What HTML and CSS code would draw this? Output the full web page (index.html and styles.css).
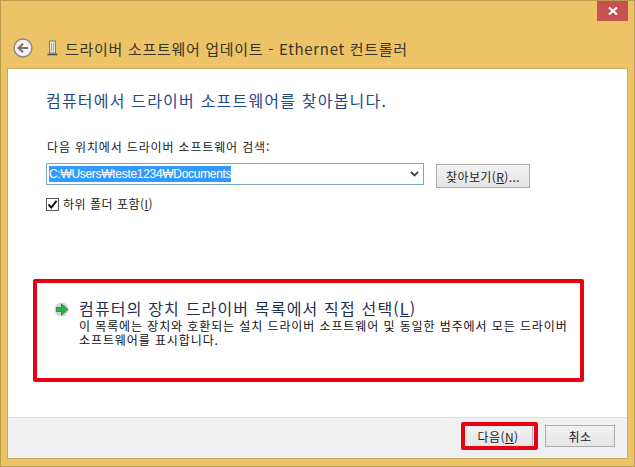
FILE: index.html
```html
<!DOCTYPE html>
<html lang="ko">
<head>
<meta charset="utf-8">
<title>드라이버 소프트웨어 업데이트</title>
<link rel="stylesheet" href="styles.css">
</head>
<body>
<div class="window">
  <div class="close"><svg width="10" height="10" viewBox="0 0 10 10"><path d="M1 1.500 9 8.500M9 1.500 1 8.500" stroke="#fff" stroke-width="2.200" fill="none"/></svg></div>
  <header class="titlebar">
    <svg class="back" width="20" height="20" viewBox="0 0 20 20"><circle cx="10" cy="10" r="9" fill="#f4f2ee" stroke="#8b8580" stroke-width="1.400"/><path d="M15 10H6M10 5.800 5.600 10 10 14.200" stroke="#7a7478" stroke-width="2.200" fill="none"/></svg>
    <svg class="device" width="11" height="16" viewBox="0 0 11 16"><rect x="2.500" y="1" width="6" height="12" fill="#e8e6d8" stroke="#7d7f70"/><path d="M4.500 3v8M6.500 3v8" stroke="#a8a898"/><path d="M0.500 14.500h10" stroke="#4a5058" stroke-width="1.600"/></svg>
    <span class="title">드라이버 소프트웨어 업데이트 - Ethernet 컨트롤러</span>
  </header>
  <main class="panel">
    <div class="content">
      <h1 class="heading">컴퓨터에서 드라이버 소프트웨어를 찾아봅니다.</h1>
      <p class="label">다음 위치에서 드라이버 소프트웨어 검색:</p>
      <div class="pathrow">
        <div class="combo"><span class="selected">C:₩Users₩teste1234₩Documents</span>
          <svg class="chev" width="9" height="6" viewBox="0 0 9 6"><path d="M1 1 4.500 4.500 8 1" stroke="#444" stroke-width="1.800" fill="none"/></svg>
        </div>
        <button class="btn browse">찾아보기(<u>R</u>)...</button>
      </div>
      <div class="check">
        <span class="box"><svg width="11" height="11" viewBox="0 0 11 11"><path d="M1.500 5.500 4.300 8.500 9.500 1.800" stroke="#111" stroke-width="2" fill="none"/></svg></span>
        <span>하위 폴더 포함(<u>I</u>)</span>
      </div>
      <div class="link">
        <svg class="arrow" width="16" height="15" viewBox="0 0 16 15"><circle cx="7.500" cy="7.500" r="7" fill="#ccd6d2"/><path d="M2.500 5.500H7.500V2l6.500 5.500-6.500 5.500V9.500H2.500Z" fill="#2fae4c" stroke="#167a2e" stroke-width=".7"/></svg>
        <div class="linktext">
          <div class="linktitle">컴퓨터의 장치 드라이버 목록에서 직접 선택(<u>L</u>)</div>
          <div class="linkdesc">이 목록에는 장치와 호환되는 설치 드라이버 소프트웨어 및 동일한 범주에서 모든 드라이버 소프트웨어를 표시합니다.</div>
        </div>
      </div>
    </div>
    <footer class="footer">
      <button class="btn next">다음(<u>N</u>)</button>
      <button class="btn cancel">취소</button>
    </footer>
  </main>
  <div class="mark mark-link"></div>
  <div class="mark mark-next"></div>
</div>
</body>
</html>
```
FILE: styles.css
```css
* { box-sizing: border-box; }
html, body { margin: 0; padding: 0; }
body {
  width: 635px;
  height: 467px;
  overflow: hidden;
  font-family: "Noto Sans CJK KR", "Liberation Sans", sans-serif;
  color: #222;
}
.window {
  position: relative;
  width: 635px;
  height: 467px;
  padding: 0 7px 8px;
  display: flex;
  flex-direction: column;
  background: #ecc467;
  border: 1px solid #bd9c4c;
}
.close {
  position: absolute;
  top: 0;
  right: 6px;
  width: 31px;
  height: 20px;
  background: #c75050;
  display: flex;
  align-items: center;
  justify-content: center;
}
.titlebar {
  height: 68px;
  flex: none;
  display: flex;
  align-items: center;
  padding: 26px 0 0 5px;
}
.back { margin-right: 14px; }
.device { margin-right: 7px; }
.title {
  font-size: 15px;
  letter-spacing: 0.7px;
  color: #3a3428;
  white-space: nowrap;
}
.panel {
  flex: 1;
  display: flex;
  flex-direction: column;
  background: #fff;
  outline: 1px solid #c9a95a;
}
.content {
  flex: 1;
  padding: 19px 0 0 38px;
}
.heading {
  margin: 0;
  font-size: 16px;
  line-height: 24px;
  font-weight: 400;
  letter-spacing: 1.2px;
  color: #1f4a8c;
}
.label {
  margin: 27px 0 0 1px;
  font-size: 12px;
  line-height: 16px;
  letter-spacing: 0.85px;
}
.pathrow {
  display: flex;
  align-items: flex-start;
  margin-top: 8px;
}
.combo {
  width: 378px;
  height: 22px;
  display: flex;
  align-items: center;
  justify-content: space-between;
  padding: 0 4px 0 2px;
  border: 1px solid #7fa6bd;
  background: #fff;
  font-family: "Liberation Sans", "Noto Sans CJK KR", sans-serif;
  font-size: 12px;
  letter-spacing: -0.3px;
}
.selected {
  background: #3399ff;
  color: #fff;
  line-height: 16px;
  white-space: nowrap;
}
.btn {
  font-family: "Noto Sans CJK KR", "Liberation Sans", sans-serif;
  font-size: 12px;
  color: #222;
  padding: 0;
  border: 1px solid #acacac;
  background: linear-gradient(#f2f2f2, #e5e5e5);
  white-space: nowrap;
  letter-spacing: 0.4px;
}
.browse {
  width: 94px;
  height: 24px;
  margin: 1px 0 0 12px;
}
.check {
  display: flex;
  align-items: center;
  gap: 4px;
  margin: 8px 0 0;
  font-size: 12px;
  line-height: 16px;
  letter-spacing: 0.5px;
}
.box {
  width: 13px;
  height: 13px;
  border: 1px solid #555;
  background: #fff;
  display: flex;
  align-items: center;
  justify-content: center;
}
.link {
  display: flex;
  margin: 87px 0 0 8px;
}
.arrow {
  flex: none;
  margin: 3px 9px 0 0;
}
.linktext { width: 492px; }
.linktitle {
  font-size: 16px;
  line-height: 19px;
  letter-spacing: 1.17px;
  color: #1f3050;
}
.linkdesc {
  margin-top: 1px;
  font-size: 12px;
  line-height: 14px;
  letter-spacing: 0.9px;
  color: #111;
}
.footer {
  flex: none;
  height: 41px;
  display: flex;
  align-items: flex-start;
  justify-content: flex-end;
  gap: 12px;
  padding: 7px 12px 0 0;
  background: #f0f0f0;
  border-top: 1px solid #dfdfdf;
}
.next, .cancel { width: 70px; height: 22px; }
.mark {
  position: absolute;
  border: 4px solid #e60012;
  border-radius: 2px;
  pointer-events: none;
}
.mark-link { left: 32px; top: 278px; width: 551px; height: 103px; }
.mark-next { left: 460px; top: 421px; width: 77px; height: 28px; }
```
